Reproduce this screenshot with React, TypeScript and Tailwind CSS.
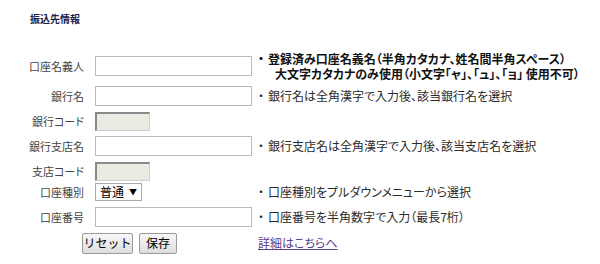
import React from "react";

const font = "font-['Noto_Sans_CJK_JP','Noto_Sans',sans-serif]";

function Label({ children }: { children: React.ReactNode }) {
  return (
    <div className="w-[84px] shrink-0 text-right text-[11px] leading-[14px] text-[#444] [font-feature-settings:'palt']">
      {children}
    </div>
  );
}

function TextInput() {
  return (
    <div className="ml-[11px] w-[157px] h-[20px] shrink-0 border border-[#b9b9b9] bg-white" />
  );
}

function DisabledInput() {
  return (
    <div className="ml-[11px] w-[55px] h-[19px] shrink-0 border border-[#cfcfcf] border-t-2 border-l-2 border-t-[#8a8a8a] border-l-[#8a8a8a] bg-[#ebebe4]" />
  );
}

function Note({ children }: { children: React.ReactNode }) {
  return (
    <div className="ml-[6px] flex text-[12px] leading-[14px] text-[#2a2a2a] [font-feature-settings:'palt']">
      <span className="w-[10px] shrink-0">・</span>
      <span>{children}</span>
    </div>
  );
}

export default function App() {
  return (
    <div className={`w-[600px] h-[264px] bg-white overflow-hidden ${font}`}>
      <div className="pl-[30px] pt-[12px] h-[50px] text-[10px] leading-[14px] font-bold text-[#1c1c4a]">
        振込先情報
      </div>
      <div className="flex flex-col">
        <div className="flex items-center h-[31px]">
          <Label>口座名義人</Label>
          <TextInput />
          <div className="ml-[6px] text-[12px] leading-[15px] font-bold text-[#111] [font-feature-settings:'palt'] pt-[1px]">
            <div className="flex">
              <span className="w-[10px] shrink-0">・</span>
              <span>登録済み口座名義名（半角カタカナ、姓名間半角スペース）</span>
            </div>
            <div className="pl-[17px]">大文字カタカナのみ使用（小文字「ャ」、「ュ」、「ョ」 使用不可）</div>
          </div>
        </div>
        <div className="flex items-center h-[30px]">
          <Label>銀行名</Label>
          <TextInput />
          <Note>銀行名は全角漢字で入力後、該当銀行名を選択</Note>
        </div>
        <div className="flex items-center h-[20px]">
          <Label>銀行コード</Label>
          <DisabledInput />
        </div>
        <div className="flex items-center h-[30px]">
          <Label>銀行支店名</Label>
          <TextInput />
          <Note>銀行支店名は全角漢字で入力後、該当支店名を選択</Note>
        </div>
        <div className="flex items-center h-[20px]">
          <Label>支店コード</Label>
          <DisabledInput />
        </div>
        <div className="flex items-center h-[22px]">
          <Label>口座種別</Label>
          <div className="ml-[11px] w-[157px] shrink-0">
            <div className="w-[47px] h-[18px] border border-[#a9a9a9] bg-white flex items-center pl-[4px] text-[12px] leading-[14px] text-black">
              普通
              <span className="ml-[5px] text-[8px]">▼</span>
            </div>
          </div>
          <Note>口座種別をプルダウンメニューから選択</Note>
        </div>
        <div className="flex items-center h-[27px]">
          <Label>口座番号</Label>
          <TextInput />
          <Note>口座番号を半角数字で入力（最長7桁）</Note>
        </div>
        <div className="flex items-center h-[26px]">
          <div className="ml-[82px] w-[51px] h-[21px] border border-[#9a9a9a] rounded-[2px] bg-gradient-to-b from-[#f8f8f8] to-[#dddddd] flex items-center justify-center text-[12px] text-black">
            リセット
          </div>
          <div className="ml-[6px] w-[38px] h-[21px] border border-[#9a9a9a] rounded-[2px] bg-gradient-to-b from-[#f8f8f8] to-[#dddddd] flex items-center justify-center text-[12px] text-black">
            保存
          </div>
          <a className="ml-[81px] text-[12px] leading-[14px] text-[#5a3c8c] underline [font-feature-settings:'palt']" href="#">
            詳細はこちらへ
          </a>
        </div>
      </div>
    </div>
  );
}
